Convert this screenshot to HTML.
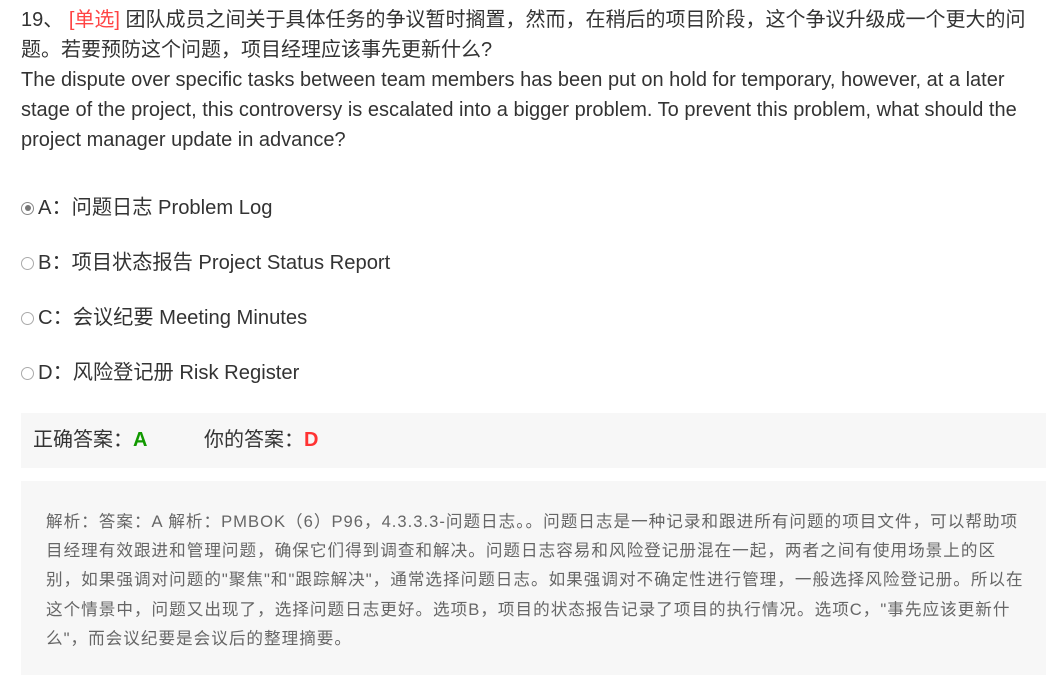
<!DOCTYPE html>
<html><head><meta charset="utf-8"><style>
body{margin:0;width:1046px;height:675px;overflow:hidden;background:#fff;font-family:"Liberation Sans","Noto Sans CJK SC",sans-serif;color:#333}
.q{position:absolute;left:21px;top:5px;width:1025px;font-size:20px;line-height:30px;white-space:nowrap}
.red{color:#f44}
.opt{position:absolute;left:21px;font-size:20.2px;line-height:24px;display:flex;align-items:center;white-space:nowrap}
.r{width:13px;height:13px;border:1px solid #aaa;border-radius:50%;box-sizing:border-box;margin-right:4px;background:#fff;position:relative}
.r.on{border-color:#888}
.r.on::after{content:"";position:absolute;left:2.5px;top:2.5px;width:6px;height:6px;border-radius:50%;background:#777}
.ans{position:absolute;left:21px;top:413px;width:1025px;height:55px;background:#f7f7f7;font-size:20px;line-height:55px}
.exp{position:absolute;left:21px;top:481px;width:1025px;height:194px;background:#f7f7f7}
.exp div{position:absolute;left:25px;top:26px;font-size:16.6px;letter-spacing:1px;line-height:29.2px;color:#666;white-space:nowrap}
</style></head><body>
<div class="q">19、 <span class="red">[单选]</span> 团队成员之间关于具体任务的争议暂时搁置，然而，在稍后的项目阶段，这个争议升级成一个更大的问<br>题。若要预防这个问题，项目经理应该事先更新什么?<br>The dispute over specific tasks between team members has been put on hold for temporary, however, at a later<br>stage of the project, this controversy is escalated into a bigger problem. To prevent this problem, what should the<br>project manager update in advance?</div>
<div class="opt" style="top:196px"><span class="r on"></span>A：问题日志 Problem Log</div>
<div class="opt" style="top:251px"><span class="r"></span>B：项目状态报告 Project Status Report</div>
<div class="opt" style="top:306px"><span class="r"></span>C：会议纪要 Meeting Minutes</div>
<div class="opt" style="top:361px"><span class="r"></span>D：风险登记册 Risk Register</div>
<div class="ans"><span style="position:absolute;left:12px">正确答案：<b style="color:#190">A</b></span><span style="position:absolute;left:183px">你的答案：<b style="color:#f33">D</b></span></div>
<div class="exp"><div>解析：答案：A 解析：PMBOK（6）P96，4.3.3.3-问题日志。。问题日志是一种记录和跟进所有问题的项目文件，可以帮助项<br>目经理有效跟进和管理问题，确保它们得到调查和解决。问题日志容易和风险登记册混在一起，两者之间有使用场景上的区<br>别，如果强调对问题的"聚焦"和"跟踪解决"，通常选择问题日志。如果强调对不确定性进行管理，一般选择风险登记册。所以在<br>这个情景中，问题又出现了，选择问题日志更好。选项B，项目的状态报告记录了项目的执行情况。选项C，"事先应该更新什<br>么"，而会议纪要是会议后的整理摘要。</div></div>
</body></html>
